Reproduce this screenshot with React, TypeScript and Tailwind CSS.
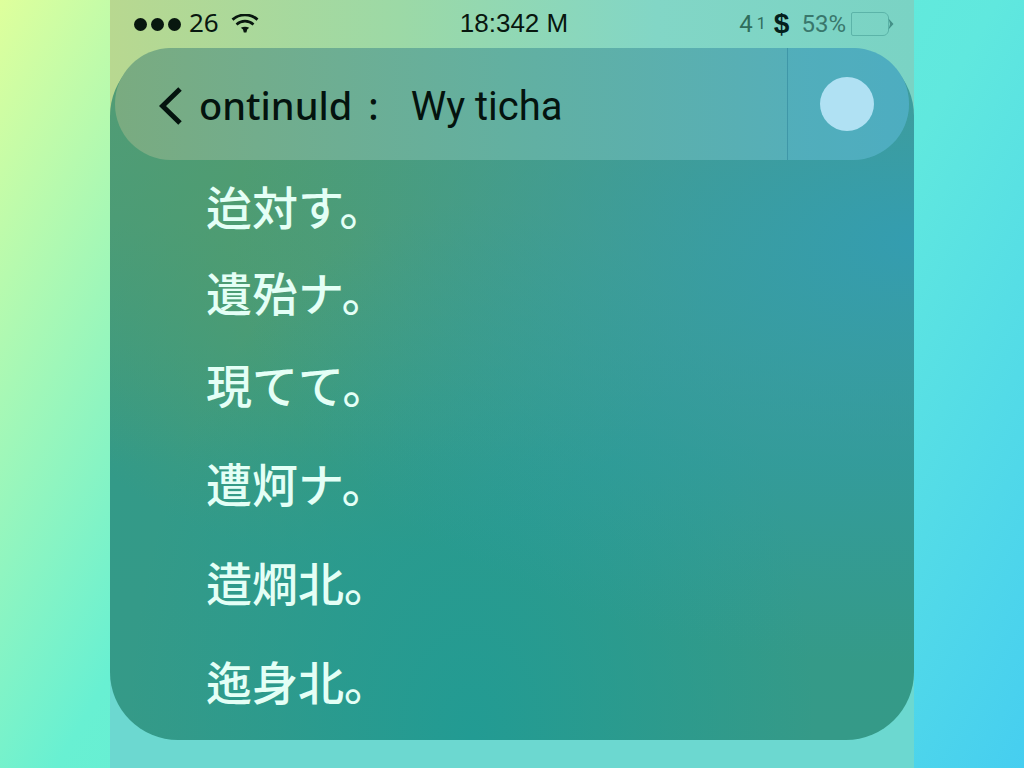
import { useState } from "react";

const messages = [
  { text: "迨対す。", spacing: "" },
  { text: "遺殆ナ。", spacing: "mt-[38px]" },
  { text: "現てて。", spacing: "mt-11" },
  { text: "遭炣ナ。", spacing: "mt-[51px]" },
  { text: "逪烱北。", spacing: "mt-[51px]" },
  { text: "迤身北。", spacing: "mt-[51px]" },
];

const WifiIcon = () => (
  <svg viewBox="0 0 28 20" className="h-5 w-7" fill="none" stroke="currentColor" aria-hidden="true">
    <path d="M1.5 5.6C8.5-.6 19.5-.6 26.5 5.6" strokeWidth="2.8" />
    <path d="M5.5 10.4C10.5 6 17.5 6 22.5 10.4" strokeWidth="2.6" />
    <path d="M9.8 13.8Q14 11.6 18.2 13.8L16.2 15.4L15.4 18.6H12.8L12 15.4Z" fill="currentColor" stroke="none" />
  </svg>
);

const BatteryIcon = () => (
  <svg viewBox="0 0 44 26" className="h-[26px] w-11" fill="none" aria-hidden="true">
    <path
      d="M3 1.5H33Q37 1.5 38.5 6V20Q37 24.5 33 24.5H3Q1.5 24.5 1.5 23V3Q1.5 1.5 3 1.5Z"
      stroke="#4fa69c"
      strokeOpacity="0.7"
    />
    <path d="M38.5 7.5L43.5 13L38.5 18.5L40 13Z" fill="#439188" />
  </svg>
);

const StatusBar = () => (
  <div className="grid h-12 grid-cols-3 items-center px-6 pr-5 text-[26px] leading-none text-[#08170f]">
    <div className="flex items-center">
      <div className="flex gap-1">
        {[0, 1, 2].map((i) => (
          <span key={i} className="size-[13px] rounded-full bg-[#08170f]" />
        ))}
      </div>
      <span className="ml-2 mr-3 pb-1 font-['Noto_Sans'] leading-none">26</span>
      <WifiIcon />
    </div>
    <p className="pb-0.5 text-center font-['Liberation_Sans']">18:342 M</p>
    <div className="flex items-center justify-end font-['Roboto'] text-2xl leading-none">
      <span className="text-[#2f6d5c]">4</span>
      <span className="ml-1 text-base text-[#2f6d5c]">1</span>
      <span className="ml-2 mr-3 font-['Liberation_Sans'] text-[28px] font-bold text-[#04201c]">$</span>
      <span className="text-[#39776c]">53%</span>
      <span className="ml-1">
        <BatteryIcon />
      </span>
    </div>
  </div>
);

const Header = () => {
  const [active, setActive] = useState(false);

  return (
    <header className="mx-[5px] flex h-28 overflow-hidden rounded-full bg-linear-to-r from-[#7aab80] via-[#62b0a1] to-[#50aec2] text-[#04130e]">
      <div className="flex flex-1 items-center pl-11 pt-1">
        <button type="button" aria-label="Back" className="mr-4">
          <svg viewBox="0 0 24 38" className="h-[38px] w-6" fill="none" stroke="currentColor" strokeWidth="5">
            <path d="M21 2L3.5 19L21 36" />
          </svg>
        </button>
        <h1 className="flex items-baseline whitespace-pre font-['Roboto'] text-[40px] leading-none">
          <span className="font-['Noto_Sans'] text-[38px] font-medium leading-none">ontinuld</span>
          <span className="ml-4 mr-8 font-['Noto_Sans'] text-[38px] font-medium leading-none">:</span>
          <span>Wy ticha</span>
        </h1>
      </div>
      <div className="flex w-[122px] items-center border-l border-[#3f97a8] bg-[#4aabc0]/30 pl-8">
        <button
          type="button"
          aria-label="Toggle"
          aria-pressed={active}
          onClick={() => setActive(!active)}
          className="size-[54px] rounded-full bg-[#b0e1f3]"
        />
      </div>
    </header>
  );
};

const App = () => (
  <div className="min-h-screen bg-[linear-gradient(120deg,#deff9c_0%,#68f0d2_34%,#60e8de_68%,#46cef0_100%)]">
    <main className="mx-auto min-h-screen w-full max-w-[804px] bg-[linear-gradient(to_right,#b8d890_0%,#9cd9a6_36%,#82d6c6_68%,#7ad3c4_100%)]">
      <div className="min-h-screen bg-[linear-gradient(to_bottom,transparent_30%,#6cd8d0_90%)] pb-7">
        <StatusBar />
        <section className="rounded-[68px] bg-[radial-gradient(ellipse_at_100%_28%,#349db0_0%,#349db000_60%),radial-gradient(ellipse_at_45%_100%,#229b93_0%,#229b9300_55%),radial-gradient(ellipse_at_30%_28%,#509c6e_0%,#509c6e00_45%),linear-gradient(to_bottom,#549c76_0%,#4a9c7a_25%,#339a88_60%,#359a88_100%)]">
          <Header />
          <ul className="px-24 pb-9 pt-[21px] font-['Noto_Sans_CJK_JP',sans-serif] text-[46px] font-medium leading-[48px] text-[#e4fff6]">
            {messages.map((m) => (
              <li key={m.text} className={m.spacing}>
                {m.text}
              </li>
            ))}
          </ul>
        </section>
      </div>
    </main>
  </div>
);

export default App;
